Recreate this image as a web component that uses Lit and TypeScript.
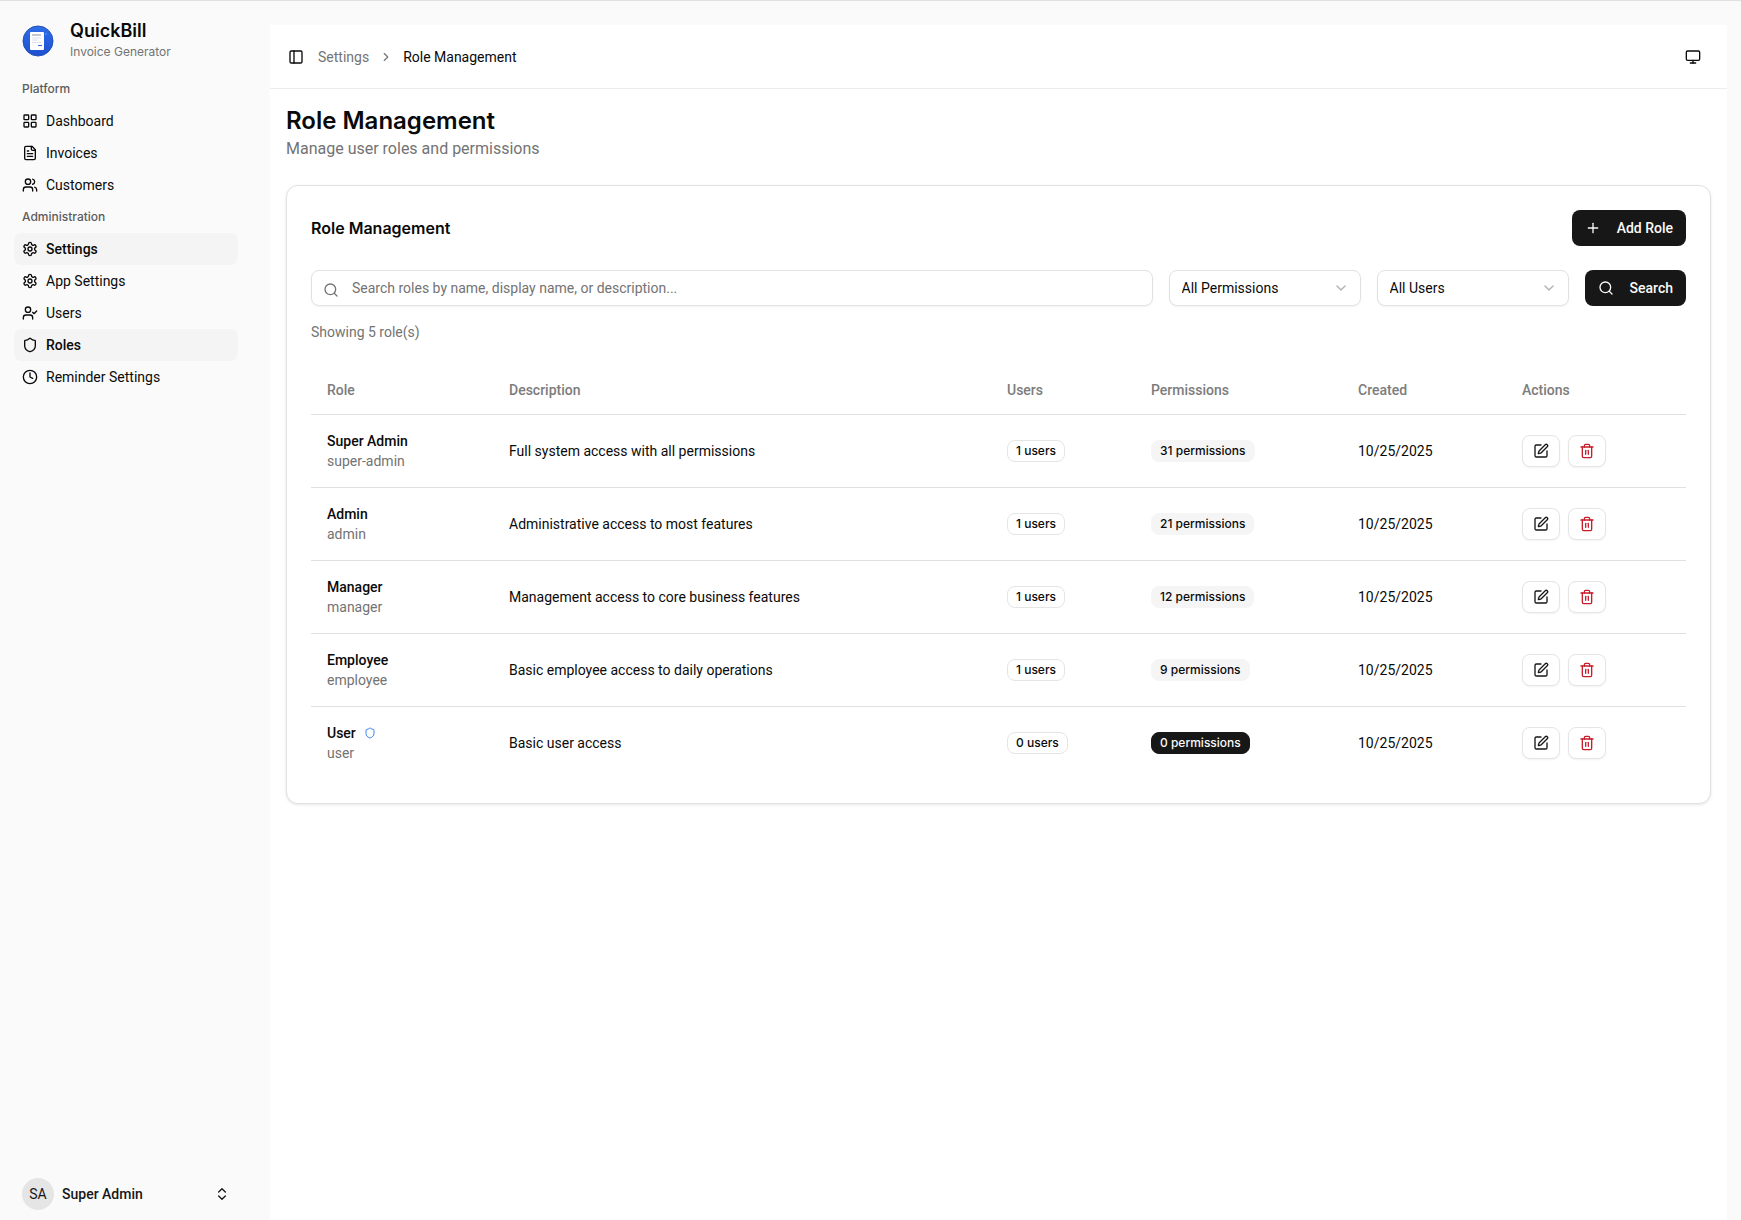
import { LitElement, html, svg, css, TemplateResult } from "lit";
import { customElement, property } from "lit/decorators.js";
import { classMap } from "lit/directives/class-map.js";

const glyphs: Record<string, TemplateResult> = {
  grid: svg`<rect width="7" height="7" x="3" y="3" rx="1"/><rect width="7" height="7" x="14" y="3" rx="1"/><rect width="7" height="7" x="14" y="14" rx="1"/><rect width="7" height="7" x="3" y="14" rx="1"/>`,
  file: svg`<path d="M15 2H6a2 2 0 0 0-2 2v16a2 2 0 0 0 2 2h12a2 2 0 0 0 2-2V7Z"/><path d="M14 2v4a2 2 0 0 0 2 2h4"/><path d="M10 9H8"/><path d="M16 13H8"/><path d="M16 17H8"/>`,
  users: svg`<path d="M16 21v-2a4 4 0 0 0-4-4H6a4 4 0 0 0-4 4v2"/><circle cx="9" cy="7" r="4"/><path d="M22 21v-2a4 4 0 0 0-3-3.87"/><path d="M16 3.13a4 4 0 0 1 0 7.75"/>`,
  gear: svg`<path d="M12.22 2h-.44a2 2 0 0 0-2 2v.18a2 2 0 0 1-1 1.73l-.43.25a2 2 0 0 1-2 0l-.15-.08a2 2 0 0 0-2.73.73l-.22.38a2 2 0 0 0 .73 2.73l.15.1a2 2 0 0 1 1 1.72v.51a2 2 0 0 1-1 1.74l-.15.09a2 2 0 0 0-.73 2.73l.22.38a2 2 0 0 0 2.73.73l.15-.08a2 2 0 0 1 2 0l.43.25a2 2 0 0 1 1 1.73V20a2 2 0 0 0 2 2h.44a2 2 0 0 0 2-2v-.18a2 2 0 0 1 1-1.73l.43-.25a2 2 0 0 1 2 0l.15.08a2 2 0 0 0 2.73-.73l.22-.39a2 2 0 0 0-.73-2.73l-.15-.08a2 2 0 0 1-1-1.74v-.5a2 2 0 0 1 1-1.74l.15-.09a2 2 0 0 0 .73-2.73l-.22-.38a2 2 0 0 0-2.73-.73l-.15.08a2 2 0 0 1-2 0l-.43-.25a2 2 0 0 1-1-1.73V4a2 2 0 0 0-2-2z"/><circle cx="12" cy="12" r="3"/>`,
  userCheck: svg`<path d="m16 11 2 2 4-4"/><path d="M16 21v-2a4 4 0 0 0-4-4H6a4 4 0 0 0-4 4v2"/><circle cx="9" cy="7" r="4"/>`,
  shield: svg`<path d="M20 13c0 5-3.5 7.5-7.66 8.95a1 1 0 0 1-.67-.01C7.5 20.5 4 18 4 13V6a1 1 0 0 1 1-1c2 0 4.5-1.2 6.24-2.72a1.17 1.17 0 0 1 1.52 0C14.51 3.81 17 5 19 5a1 1 0 0 1 1 1z"/>`,
  clock: svg`<circle cx="12" cy="12" r="10"/><path d="M12 6v6l4 2"/>`,
  panel: svg`<rect width="18" height="18" x="3" y="3" rx="2"/><path d="M9 3v18"/>`,
  right: svg`<path d="m9 18 6-6-6-6"/>`,
  down: svg`<path d="m6 9 6 6 6-6"/>`,
  upDown: svg`<path d="m7 15 5 5 5-5"/><path d="m7 9 5-5 5 5"/>`,
  monitor: svg`<rect width="20" height="14" x="2" y="3" rx="2"/><path d="M8 21h8"/><path d="M12 17v4"/>`,
  plus: svg`<path d="M5 12h14"/><path d="M12 5v14"/>`,
  search: svg`<circle cx="11" cy="11" r="8"/><path d="m21 21-4.3-4.3"/>`,
  edit: svg`<path d="M12 3H5a2 2 0 0 0-2 2v14a2 2 0 0 0 2 2h14a2 2 0 0 0 2-2v-7"/><path d="M18.375 2.625a1 1 0 0 1 3 3l-9.013 9.014a2 2 0 0 1-.853.505l-2.873.84a.5.5 0 0 1-.62-.62l.84-2.873a2 2 0 0 1 .506-.852z"/>`,
  trash: svg`<path d="M3 6h18"/><path d="M19 6v14a2 2 0 0 1-2 2H7a2 2 0 0 1-2-2V6"/><path d="M8 6V4a2 2 0 0 1 2-2h4a2 2 0 0 1 2 2v2"/><path d="M10 11v6"/><path d="M14 11v6"/>`,
};

@customElement("line-icon")
class LineIcon extends LitElement {
  @property() name = "";
  static styles = css`
    :host { display: block; flex: none; width: 16px; height: 16px; }
    .glyph { display: block; width: 100%; height: 100%; }
  `;
  render() {
    return html`<svg class="glyph" viewBox="0 0 24 24" fill="none" stroke="currentColor" stroke-width="2"
      stroke-linecap="round" stroke-linejoin="round" aria-hidden="true">${glyphs[this.name]}</svg>`;
  }
}

interface NavItem { label: string; icon: string; active?: boolean; }

const sections: { title: string; items: NavItem[] }[] = [
  {
    title: "Platform",
    items: [
      { label: "Dashboard", icon: "grid" },
      { label: "Invoices", icon: "file" },
      { label: "Customers", icon: "users" },
    ],
  },
  {
    title: "Administration",
    items: [
      { label: "Settings", icon: "gear", active: true },
      { label: "App Settings", icon: "gear" },
      { label: "Users", icon: "userCheck" },
      { label: "Roles", icon: "shield", active: true },
      { label: "Reminder Settings", icon: "clock" },
    ],
  },
];

@customElement("app-sidebar")
class AppSidebar extends LitElement {
  static styles = css`
    :host { display: flex; flex-direction: column; flex: none; width: 270px; box-sizing: border-box; padding: 16px 32px 10px 14px; font-size: 14px; line-height: 20px; }
    .brand { display: flex; align-items: center; gap: 16px; padding: 0 8px; height: 48px; color: inherit; text-decoration: none; }
    .logo { width: 32px; height: 32px; flex: none; }
    .brand-text { display: flex; flex-direction: column; }
    .brand-name { font: 600 18px/22px var(--display); }
    .brand-sub { font: 400 12px/20px var(--display); color: #737373; }
    .nav { flex: 1; padding-top: 8px; }
    .heading { margin: 0; padding: 0 8px; font: 500 12px/32px var(--display); color: #5c5c5c; }
    .list { list-style: none; margin: 0; padding: 0; }
    .item { display: flex; align-items: center; gap: 8px; height: 32px; box-sizing: border-box; padding: 0 8px; border-radius: 8px; color: #0a0a0a; text-decoration: none; }
    .item.active { background: #f4f4f4; font-weight: 500; }
    .account { display: flex; align-items: center; gap: 8px; height: 32px; padding: 0 8px; border: 0; background: none; font: inherit; font-weight: 500; color: #171717; text-align: left; }
    .avatar { width: 32px; height: 32px; line-height: 32px; border-radius: 50%; background: #e5e5e5; text-align: center; font-weight: 400; }
    .who { flex: 1; }
  `;
  render() {
    return html`
      <a class="brand" href="#">
        <svg class="logo" viewBox="0 0 32 32" aria-hidden="true">
          <defs><linearGradient id="disc" x1="0" y1="0" x2="0" y2="1"><stop offset="0" stop-color="#2f6fe8"/><stop offset="1" stop-color="#1d4fd0"/></linearGradient></defs>
          <circle cx="16" cy="16" r="15" fill="url(#disc)" stroke="#2450b8"/>
          <rect x="8" y="7" width="14" height="18" rx="1" fill="#fff"/>
          <path d="M10 10h9" stroke="#8792a5"/>
          <path d="M10 13h9M10 15h6M10 17.500h9" stroke="#dbe3ef"/>
          <path d="M16 20.500h4" stroke="#3b6fd8"/>
          <circle cx="24" cy="9" r="1" fill="#4f8af5"/>
        </svg>
        <span class="brand-text"><span class="brand-name">QuickBill</span><span class="brand-sub">Invoice Generator</span></span>
      </a>
      <nav class="nav" aria-label="Main">
        ${sections.map((s) => html`
          <h2 class="heading">${s.title}</h2>
          <ul class="list">
            ${s.items.map((i) => html`<li><a href="#" class=${classMap({ item: true, active: !!i.active })}><line-icon name=${i.icon}></line-icon>${i.label}</a></li>`)}
          </ul>`)}
      </nav>
      <button class="account"><span class="avatar">SA</span><span class="who">Super Admin</span><line-icon name="upDown"></line-icon></button>
    `;
  }
}

interface Role { name: string; slug: string; description: string; users: number; permissions: number; isDefault?: boolean; }

const roles: Role[] = [
  { name: "Super Admin", slug: "super-admin", description: "Full system access with all permissions", users: 1, permissions: 31 },
  { name: "Admin", slug: "admin", description: "Administrative access to most features", users: 1, permissions: 21 },
  { name: "Manager", slug: "manager", description: "Management access to core business features", users: 1, permissions: 12 },
  { name: "Employee", slug: "employee", description: "Basic employee access to daily operations", users: 1, permissions: 9 },
  { name: "User", slug: "user", description: "Basic user access", users: 0, permissions: 0, isDefault: true },
];

@customElement("role-table")
class RoleTable extends LitElement {
  static styles = css`
    :host { display: block; }
    .table { width: 100%; table-layout: fixed; border-collapse: separate; border-spacing: 0; font-size: 14px; line-height: 20px; }
    .c-role { width: 182px; }
    .c-users { width: 144px; }
    .c-perms { width: 207px; }
    .c-created { width: 164px; }
    .c-actions { width: 180px; }
    th { height: 48px; padding: 0 16px; text-align: left; font-weight: 500; color: #7c7c7c; border-bottom: 1px solid #e0e0e0; }
    td { padding: 16px; border-bottom: 1px solid #e0e0e0; vertical-align: middle; }
    tr:last-child td { border-bottom: 0; }
    .name { display: flex; align-items: center; gap: 8px; font-weight: 500; }
    .mark { width: 12px; height: 12px; color: #3b82f6; }
    .slug { color: #737373; }
    .cell { display: flex; align-items: center; height: 40px; }
    .badge { box-sizing: border-box; height: 22px; padding: 0 8px; border: 1px solid #e5e5e5; border-radius: 8px; font: 500 12px/20px var(--display); white-space: nowrap; }
    .badge.soft { background: #f5f5f5; border-color: #f5f5f5; }
    .badge.solid { background: #171717; border-color: #171717; color: #fafafa; }
    .actions { gap: 8px; }
    .act { display: flex; align-items: center; justify-content: center; width: 38px; height: 32px; padding: 0; border: 1px solid #e5e5e5; border-radius: 8px; background: #fff; color: #171717; box-shadow: 0 1px 2px rgb(0 0 0 / 5%); }
    .act.danger { color: #c81e2b; }
  `;
  render() {
    return html`<table class="table">
      <colgroup><col class="c-role" /><col /><col class="c-users" /><col class="c-perms" /><col class="c-created" /><col class="c-actions" /></colgroup>
      <thead><tr>${["Role", "Description", "Users", "Permissions", "Created", "Actions"].map((h) => html`<th scope="col">${h}</th>`)}</tr></thead>
      <tbody>
        ${roles.map((r) => html`<tr>
          <td><div class="name">${r.name}${r.isDefault ? html`<line-icon class="mark" name="shield"></line-icon>` : ""}</div><div class="slug">${r.slug}</div></td>
          <td>${r.description}</td>
          <td><div class="cell"><span class="badge">${r.users} users</span></div></td>
          <td><div class="cell"><span class=${classMap({ badge: true, soft: r.permissions > 0, solid: r.permissions === 0 })}>${r.permissions} permissions</span></div></td>
          <td>10/25/2025</td>
          <td><div class="cell actions">
            <button class="act" aria-label="Edit ${r.name}"><line-icon name="edit"></line-icon></button>
            <button class="act danger" aria-label="Delete ${r.name}"><line-icon name="trash"></line-icon></button>
          </div></td>
        </tr>`)}
      </tbody>
    </table>`;
  }
}

@customElement("app-root")
class AppRoot extends LitElement {
  static styles = css`
    :host { --body: Roboto, "Liberation Sans", sans-serif; --display: Inter, Roboto, sans-serif; display: flex; box-sizing: border-box; min-height: 100vh; border-top: 1px solid #e0e0e0; background: #fafafa; color: #0a0a0a; font: 400 14px/20px var(--body); }
    .main { flex: 1; min-width: 0; margin: 24px 14px 0 0; background: #fff; }
    .topbar { display: flex; align-items: center; justify-content: space-between; box-sizing: border-box; height: 64px; padding: 0 26px 0 18px; border-bottom: 1px solid #ededed; }
    .crumbs { display: flex; align-items: center; gap: 14px; }
    .trail { display: flex; align-items: center; gap: 10px; list-style: none; margin: 0; padding: 0; }
    .link { color: #737373; text-decoration: none; }
    .sep { width: 14px; height: 14px; color: #737373; }
    .icon-btn { padding: 0; border: 0; background: none; color: inherit; }
    .content { padding: 16px; }
    .title { margin: 0; font: 600 24px/32px var(--display); }
    .lead { margin: 0; font-size: 16px; line-height: 24px; color: #737373; }
    .card { margin-top: 24px; padding: 24px; border: 1px solid #e2e2e2; border-radius: 12px; background: #fff; box-shadow: 0 1px 3px rgb(0 0 0 / 10%); }
    .head { display: flex; align-items: center; justify-content: space-between; }
    .card-title { margin: 0; font: 600 16px/24px var(--display); }
    .primary { display: flex; align-items: center; gap: 16px; height: 36px; padding: 0 13px; border: 0; border-radius: 8px; background: #171717; color: #fafafa; font: inherit; font-weight: 500; }
    .filters { display: flex; gap: 16px; margin-top: 24px; }
    .field { position: relative; flex: 1; }
    .pick { position: relative; width: 192px; }
    .input, .select { box-sizing: border-box; width: 100%; height: 36px; border: 1px solid #e2e2e2; border-radius: 8px; background: #fff; font: inherit; color: inherit; box-shadow: 0 1px 2px rgb(0 0 0 / 5%); }
    .input { display: block; padding: 0 12px 0 40px; }
    .input::placeholder { color: #737373; opacity: 1; }
    .select { display: block; appearance: none; padding: 0 12px; }
    .glass { position: absolute; left: 12px; top: 12px; color: #737373; }
    .caret { position: absolute; right: 12px; top: 10px; color: #b0b0b0; pointer-events: none; }
    .count { margin: 16px 0 24px; color: #737373; }
  `;
  render() {
    return html`
      <app-sidebar></app-sidebar>
      <main class="main">
        <header class="topbar">
          <nav class="crumbs" aria-label="Breadcrumb">
            <button class="icon-btn" aria-label="Toggle sidebar"><line-icon name="panel"></line-icon></button>
            <ol class="trail">
              <li><a class="link" href="#">Settings</a></li>
              <li aria-hidden="true"><line-icon class="sep" name="right"></line-icon></li>
              <li aria-current="page">Role Management</li>
            </ol>
          </nav>
          <button class="icon-btn" aria-label="Theme"><line-icon name="monitor"></line-icon></button>
        </header>
        <div class="content">
          <h1 class="title">Role Management</h1>
          <p class="lead">Manage user roles and permissions</p>
          <section class="card">
            <div class="head">
              <h2 class="card-title">Role Management</h2>
              <button class="primary"><line-icon name="plus"></line-icon>Add Role</button>
            </div>
            <form class="filters" @submit=${(e: Event) => e.preventDefault()}>
              <div class="field"><line-icon class="glass" name="search"></line-icon><input class="input" type="text" aria-label="Search roles" placeholder="Search roles by name, display name, or description..." /></div>
              <div class="pick"><select class="select" aria-label="Permissions"><option>All Permissions</option></select><line-icon class="caret" name="down"></line-icon></div>
              <div class="pick"><select class="select" aria-label="Users"><option>All Users</option></select><line-icon class="caret" name="down"></line-icon></div>
              <button class="primary" type="submit"><line-icon name="search"></line-icon>Search</button>
            </form>
            <p class="count">Showing 5 role(s)</p>
            <role-table></role-table>
          </section>
        </div>
      </main>
    `;
  }
}
